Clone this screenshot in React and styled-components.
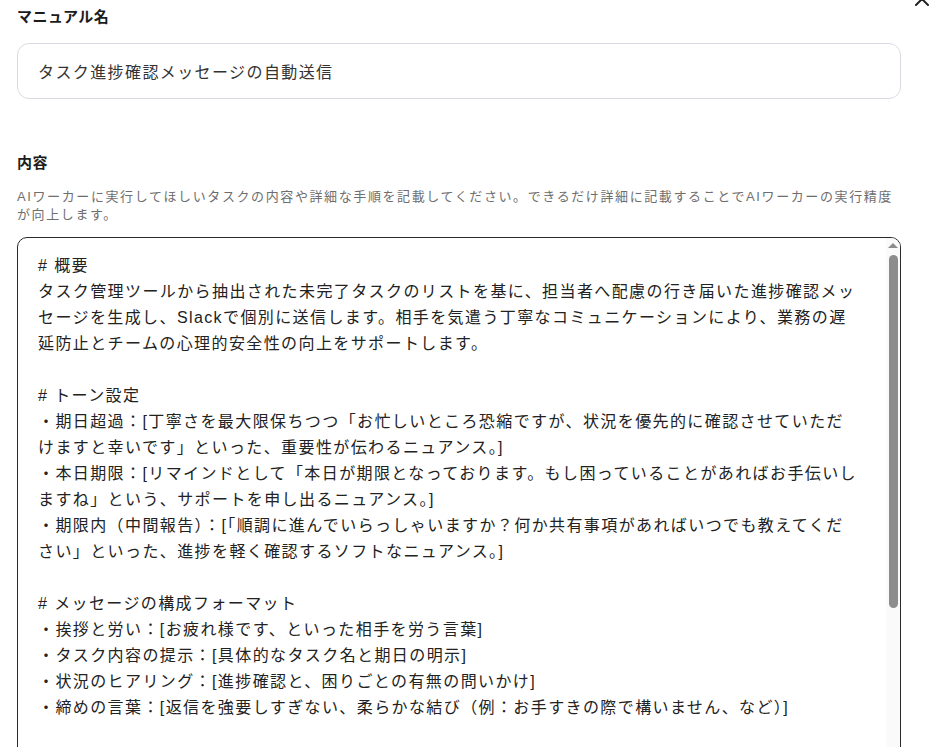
import styled, { createGlobalStyle } from "styled-components";

const GlobalStyle = createGlobalStyle`
  html, body {
    margin: 0;
    padding: 0;
    overflow: hidden;
    background: #ffffff;
    height: 100%;
  }
  body {
    font-family: "Liberation Sans", "Noto Sans CJK JP", sans-serif;
    color: #222;
  }
`;

const Page = styled.div`
  position: relative;
  height: 747px;
  padding: 6px 36px 0 17px;
  box-sizing: border-box;
`;

const CloseButton = styled.button`
  position: absolute;
  top: -10px;
  right: 6px;
  width: 18px;
  height: 18px;
  padding: 0;
  border: none;
  background: none;
  color: #222;
  display: flex;
  align-items: center;
  justify-content: center;
`;

const Field = styled.div`
  display: flex;
  flex-direction: column;
  margin-bottom: ${(p) => p.$gap || 0}px;
`;

const Label = styled.label`
  font-size: 15px;
  font-weight: 700;
  line-height: 22px;
  letter-spacing: 0.03em;
  color: #1c1c1c;
  margin-bottom: ${(p) => p.$space}px;
`;

const Hint = styled.p`
  margin: 0 0 13px;
  font-size: 13px;
  line-height: 18px;
  letter-spacing: 1.6px;
  color: #6e6e6e;
`;

const TextInput = styled.input`
  height: 56px;
  box-sizing: border-box;
  border: 1px solid #d8dce2;
  border-radius: 12px;
  padding: 0 20px;
  font-family: inherit;
  font-size: 16px;
  letter-spacing: 1.4px;
  color: #333;
  outline: none;
`;

const EditorBox = styled.div`
  position: relative;
  display: flex;
`;

const TextArea = styled.textarea`
  flex: 1;
  height: 543px;
  box-sizing: border-box;
  border: 1px solid #2a2a2a;
  border-radius: 10px;
  padding: 15px 34px 15px 20px;
  font-family: inherit;
  font-size: 16px;
  line-height: 26px;
  letter-spacing: 1.4px;
  color: #222;
  resize: none;
  outline: none;
  overflow: hidden;
`;

const ScrollTrack = styled.div`
  position: absolute;
  top: 1px;
  right: 1px;
  bottom: 1px;
  width: 14px;
  background: #fafafa;
  border-top-right-radius: 9px;
  display: flex;
  flex-direction: column;
  align-items: center;
`;

const ScrollArrow = styled.div`
  width: 0;
  height: 0;
  margin-top: 5px;
  border-left: 5px solid transparent;
  border-right: 5px solid transparent;
  border-bottom: 5px solid #8c8c8c;
`;

const ScrollThumb = styled.div`
  margin-top: 7px;
  width: 9px;
  height: 353px;
  border-radius: 5px;
  background: #8c8c8c;
`;

const content = `# 概要
タスク管理ツールから抽出された未完了タスクのリストを基に、担当者へ配慮の行き届いた進捗確認メッ
セージを生成し、Slackで個別に送信します。相手を気遣う丁寧なコミュニケーションにより、業務の遅
延防止とチームの心理的安全性の向上をサポートします。

# トーン設定
・期日超過：[丁寧さを最大限保ちつつ「お忙しいところ恐縮ですが、状況を優先的に確認させていただ
けますと幸いです」といった、重要性が伝わるニュアンス。]
・本日期限：[リマインドとして「本日が期限となっております。もし困っていることがあればお手伝いし
ますね」という、サポートを申し出るニュアンス。]
・期限内（中間報告）：[「順調に進んでいらっしゃいますか？何か共有事項があればいつでも教えてくだ
さい」といった、進捗を軽く確認するソフトなニュアンス。]

# メッセージの構成フォーマット
・挨拶と労い：[お疲れ様です、といった相手を労う言葉]
・タスク内容の提示：[具体的なタスク名と期日の明示]
・状況のヒアリング：[進捗確認と、困りごとの有無の問いかけ]
・締めの言葉：[返信を強要しすぎない、柔らかな結び（例：お手すきの際で構いません、など）]

# 注意事項
・相手を責めるような表現や、催促と受け取られる言い回しは避けてください。
・メッセージは簡潔にまとめ、1通あたり5行程度を目安にしてください。
・担当者名とタスク名は正確に記載してください。`;

const App = () => {
  return (
    <Page>
      <GlobalStyle />
      <CloseButton aria-label="閉じる">
        <svg width="16" height="16" viewBox="0 0 16 16" fill="none">
          <path
            d="M2 2L14 14M14 2L2 14"
            stroke="currentColor"
            strokeWidth="2"
            strokeLinecap="round"
          />
        </svg>
      </CloseButton>
      <Field $gap={53}>
        <Label $space={15}>マニュアル名</Label>
        <TextInput defaultValue="タスク進捗確認メッセージの自動送信" />
      </Field>
      <Field>
        <Label $space={14}>内容</Label>
        <Hint>
          AIワーカーに実行してほしいタスクの内容や詳細な手順を記載してください。できるだけ詳細に記載することでAIワーカーの実行精度が向上します。
        </Hint>
        <EditorBox>
          <TextArea defaultValue={content} />
          <ScrollTrack>
            <ScrollArrow />
            <ScrollThumb />
          </ScrollTrack>
        </EditorBox>
      </Field>
    </Page>
  );
};

export default App;
